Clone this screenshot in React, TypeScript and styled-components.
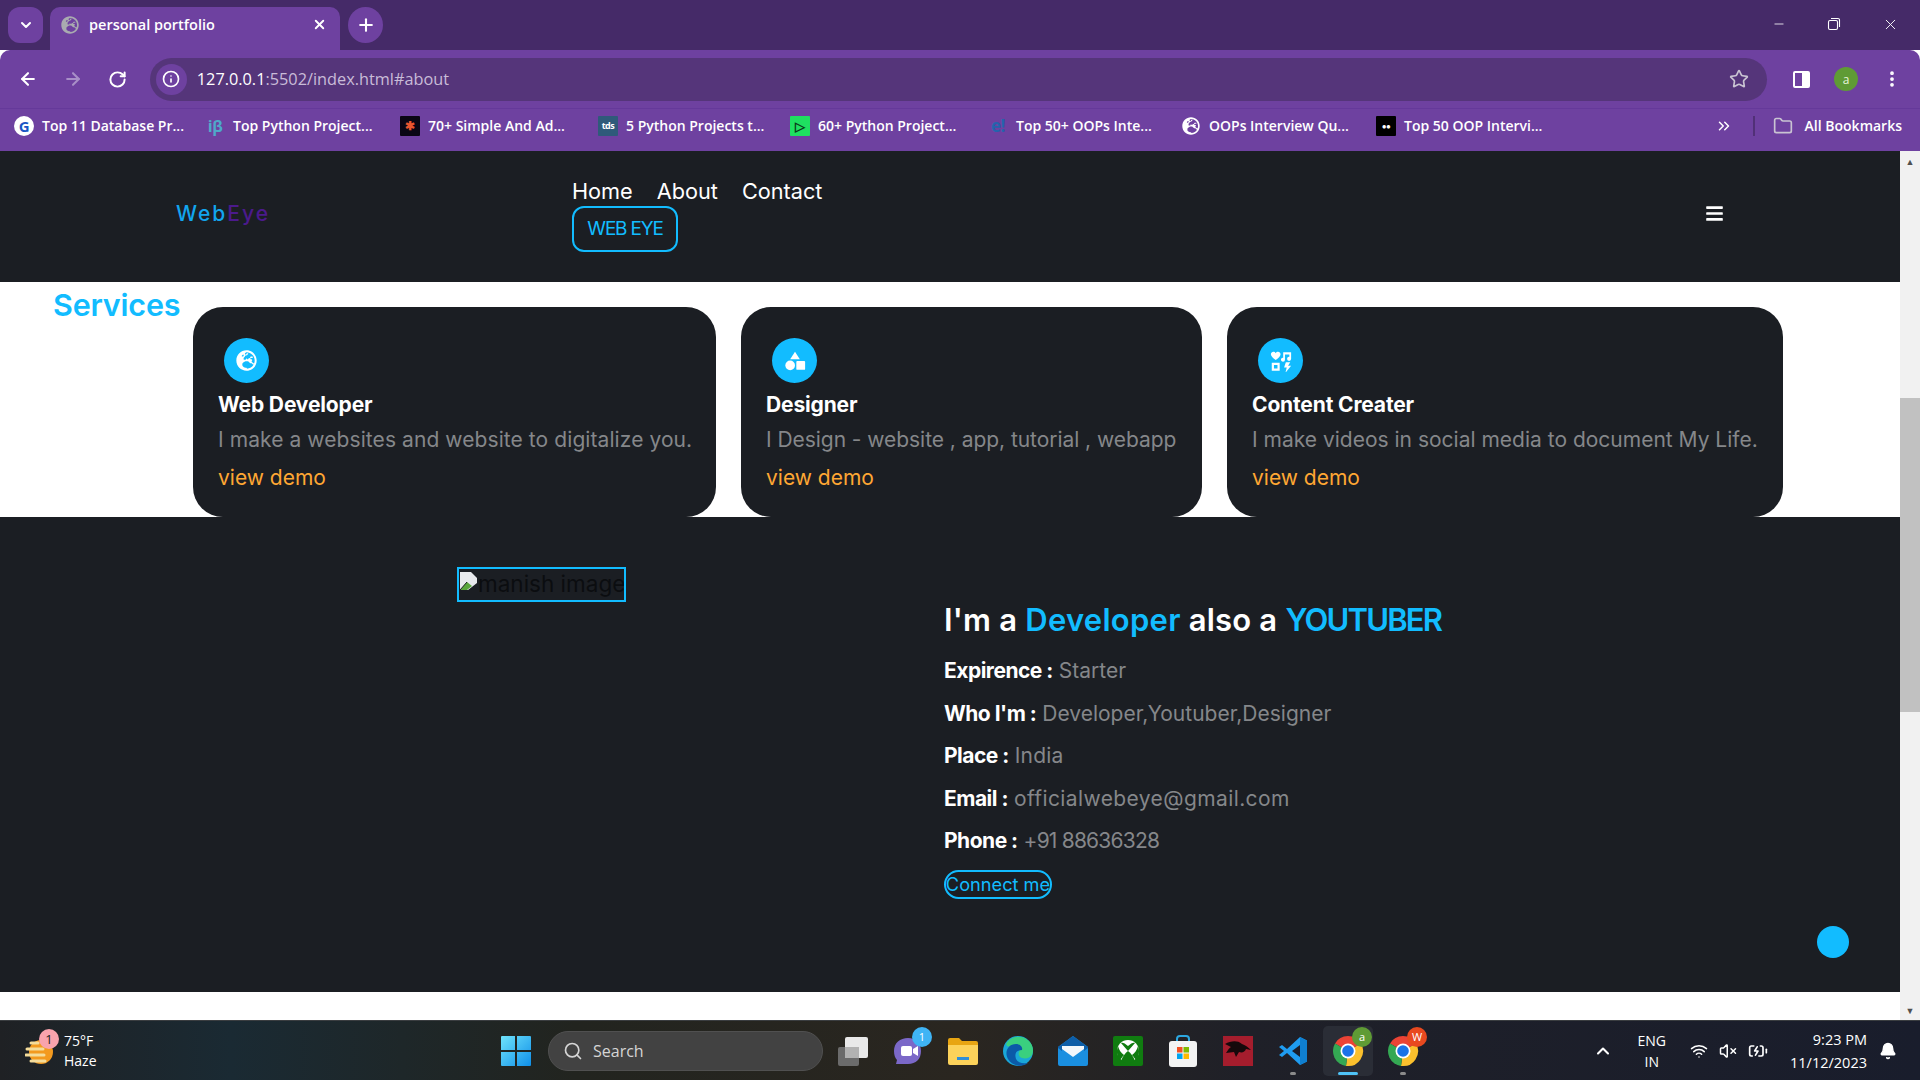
import React from 'react';
import styled, { createGlobalStyle } from 'styled-components';
import { ChevronDown, X, Plus, ArrowLeft, ArrowRight, RotateCw, Info, Star, MoreVertical, ChevronsRight, Folder, Minus, Search, ChevronUp, Wifi, VolumeX, BatteryCharging, Bell } from 'lucide-react';
import { FaBars, FaGlobeEurope } from 'react-icons/fa';

const Global = createGlobalStyle`
  html, body { margin: 0; padding: 0; width: 1920px; height: 1080px; overflow: hidden; background: #fff; }
  * { box-sizing: border-box; }
`;
const uiFont = `"Open Sans", "Noto Sans", "Liberation Sans", sans-serif`;
const webFont = `Inter, "Liberation Sans", sans-serif`;

const Shell = styled.div`width:1920px;height:1080px;display:flex;flex-direction:column;position:relative;font-family:${uiFont};`;
const TabStrip = styled.div`height:50px;background:#452a68;display:flex;align-items:flex-start;padding:7px 0 0 8px;color:#fff;`;
const ChipButton = styled.div`width:35px;height:36px;border-radius:12px;background:#6e41a0;display:flex;align-items:center;justify-content:center;margin-right:7px;`;
const Tab = styled.div`width:290px;height:43px;background:#6e41a0;border-radius:10px 10px 0 0;display:flex;align-items:center;padding:0 13px 8px 11px;font-size:14.5px;font-weight:600;gap:10px;margin-right:8px;`;
const TabTitle = styled.span`flex:1;`;
const PlusButton = styled.div`width:35px;height:36px;border-radius:50%;background:#6e41a0;display:flex;align-items:center;justify-content:center;`;
const WindowControls = styled.div`margin-left:auto;display:flex;align-items:center;gap:41px;height:34px;padding-right:21px;`;
const Toolbar = styled.div`height:58px;background:#6e41a0;border-radius:10px 10px 0 0;display:flex;align-items:center;padding:0 18px;color:#fff;`;
const NavIcons = styled.div`display:flex;align-items:center;gap:25px;width:132px;`;
const Omnibox = styled.div`width:1620px;height:43px;border-radius:22px;background:#55357a;display:flex;align-items:center;padding:0 18px 0 6px;font-size:16.3px;`;
const InfoChip = styled.div`width:31px;height:31px;border-radius:50%;background:#6e41a0;display:flex;align-items:center;justify-content:center;margin-right:10px;`;
const UrlHost = styled.span`color:#fff;`;
const UrlRest = styled.span`color:#c9bcd8;flex:1;`;
const ToolRight = styled.div`display:flex;align-items:center;gap:24px;margin-left:26px;`;
const PanelIcon = styled.div`width:17px;height:17px;border:2px solid #fff;border-right-width:8px;border-radius:2px;`;
const Avatar = styled.div`width:24px;height:24px;border-radius:50%;background:#5f9b35;color:#e8f5dc;font-size:12px;display:flex;align-items:center;justify-content:center;`;
const Bookmarks = styled.div`height:43px;background:#6e41a0;border-top:1px solid #65399a;display:flex;align-items:center;padding:0 14px 9px;color:#fff;font-size:14px;font-weight:600;`;
const Bookmark = styled.div<{ $w: number }>`width:${p => p.$w}px;display:flex;align-items:center;gap:8px;white-space:nowrap;`;
const Favicon = styled.div<{ $bg: string; $fg?: string; $round?: boolean; $size?: number }>`width:20px;height:20px;border-radius:${p => p.$round ? '50%' : '1px'};background:${p => p.$bg};color:${p => p.$fg || '#fff'};font-size:${p => p.$size || 10}px;line-height:20px;letter-spacing:-.5px;font-weight:700;display:flex;align-items:center;justify-content:center;flex:none;`;
const BookmarkEnd = styled.div`margin-left:auto;display:flex;align-items:center;gap:8px;padding-right:4px;`;
const Divider = styled.div`width:2px;height:20px;background:#513077;margin:0 10px 0 12px;`;
const FolderLabel = styled.span`margin-left:4px;`;

const Viewport = styled.div`flex:1;display:flex;min-height:0;`;
const Page = styled.main`width:1900px;display:flex;flex-direction:column;font-family:${webFont};background:#fff;`;
const Navbar = styled.nav`height:131px;background:#1b1e23;display:flex;align-items:center;padding:0 0 7px 176px;color:#fff;`;
const Logo = styled.div`width:396px;font-size:21px;letter-spacing:2px;color:#12a5ee;font-weight:500;`;
const LogoEye = styled.span`color:#4b1a8c;`;
const NavMiddle = styled.div`width:1133px;display:flex;flex-direction:column;align-items:flex-start;gap:2px;margin-top:3px;`;
const NavLinks = styled.div`display:flex;gap:24px;font-size:21.7px;font-weight:400;`;
const WebEyeButton = styled.div`width:106px;height:46px;border:2px solid #12bcff;border-radius:12px;color:#12bcff;font-size:19px;letter-spacing:-1.2px;display:flex;align-items:center;justify-content:center;`;
const Services = styled.section`height:235px;display:flex;align-items:flex-start;padding:0 0 0 53px;background:#fff;`;
const ServicesTitle = styled.h2`margin:5px 0 0;width:140px;font-size:30.5px;line-height:36px;font-weight:600;color:#12bcff;letter-spacing:-.2px;`;
const Cards = styled.div`display:flex;gap:25px;padding-top:25px;`;
const Card = styled.article<{ $w: number }>`width:${p => p.$w}px;height:210px;background:#1b1e23;border-radius:30px;padding:31px 25px 0;`;
const CardIcon = styled.div`width:45px;height:45px;border-radius:50%;background:#12bcff;color:#fff;display:flex;align-items:center;justify-content:center;margin-left:6px;`;
const CardTitle = styled.h3`margin:9px 0 0;font-size:21px;line-height:26px;font-weight:700;color:#fff;letter-spacing:-.15px;`;
const CardText = styled.p<{ $ls: number }>`margin:9px 0 0;font-size:21px;line-height:26px;color:#85878a;white-space:nowrap;letter-spacing:${p => p.$ls}px;`;
const CardLink = styled.a`display:block;margin-top:12px;font-size:21px;line-height:26px;color:#ffa733;`;
const About = styled.section`flex:1;background:#1b1e23;display:flex;padding:50px 0 0 457px;`;
const BrokenImage = styled.div`width:169px;height:35px;border:2px solid #12bcff;display:flex;align-items:flex-start;color:#0b0d10;font-size:22.5px;line-height:29px;white-space:nowrap;overflow:hidden;margin-right:318px;`;
const BrokenIcon = styled.svg`flex:none;width:19px;height:20px;margin-top:2px;`;
const Info2 = styled.div`display:flex;flex-direction:column;padding-top:34px;`;
const Heading = styled.h2`margin:0 0 11px;font-size:31px;line-height:38px;font-weight:600;color:#fff;letter-spacing:.2px;`;
const Accent = styled.span<{ $ls: number }>`color:#12bcff;letter-spacing:${p => p.$ls}px;`;
const Row = styled.div`font-size:21px;line-height:42.5px;color:#85878a;`;
const RowKey = styled.strong`font-weight:700;color:#fff;letter-spacing:-.5px;`;
const RowValue = styled.span<{ $ls: number }>`letter-spacing:${p => p.$ls}px;`;
const ConnectButton = styled.div`margin-top:7px;width:108px;height:29px;border:2px solid #12bcff;border-radius:15px;color:#12bcff;font-size:18.2px;display:flex;align-items:center;justify-content:center;white-space:nowrap;`;
const PageFoot = styled.div`height:28px;background:#fff;`;
const FloatDot = styled.div`position:absolute;left:1817px;top:926px;width:32px;height:32px;border-radius:50%;background:#12bcff;`;
const Scrollbar = styled.div`width:20px;background:#f1f1f1;display:flex;flex-direction:column;align-items:stretch;`;
const ScrollArrow = styled.div`height:20px;display:flex;align-items:center;justify-content:center;color:#505050;font-size:9px;`;
const ScrollTrack = styled.div`flex:1;padding-top:227px;`;
const ScrollThumb = styled.div`height:314px;background:#c1c1c1;`;

const Taskbar = styled.footer`height:60px;border-top:1px solid #3a3d40;background:linear-gradient(90deg,#1f2124 0,#1a2a33 12%,#22241f 30%,#2a2620 50%,#1f2028 65%,#191d2c 100%);display:flex;align-items:center;color:#fff;font-size:14px;`;
const Weather = styled.div`width:501px;display:flex;align-items:center;padding-left:25px;position:relative;`;
const WeatherBadge = styled.div`position:absolute;left:39px;top:-2px;width:20px;height:20px;border-radius:50%;background:#f9a3ad;color:#222;font-size:13px;display:flex;align-items:center;justify-content:center;`;
const WeatherText = styled.div`margin-left:9px;line-height:20px;font-size:14px;`;
const SearchPill = styled.div`width:275px;height:40px;border-radius:20px;background:#424242;border:1px solid #505050;margin:0 5px 0 17px;display:flex;align-items:center;padding:0 14px;gap:10px;font-size:16px;color:#d5d5d5;`;
const TaskIcons = styled.div`display:flex;align-items:center;gap:5px;`;
const TaskIcon = styled.div<{ $active?: boolean }>`width:50px;height:50px;border-radius:5px;background:${p => p.$active ? '#2a2d36' : 'transparent'};display:flex;align-items:center;justify-content:center;position:relative;`;
const OpenDot = styled.div<{ $active?: boolean }>`position:absolute;bottom:1px;left:50%;transform:translateX(-50%);height:3px;width:${p => p.$active ? '20px' : '6px'};border-radius:2px;background:${p => p.$active ? '#4fc3f7' : '#8b8b8b'};`;
const IconBadge = styled.div<{ $bg: string }>`position:absolute;top:1px;right:1px;width:20px;height:20px;border-radius:50%;background:${p => p.$bg};color:#fff;font-size:11px;display:flex;align-items:center;justify-content:center;`;
const Tray = styled.div`margin-left:auto;display:flex;align-items:center;padding-right:23px;`;
const Lang = styled.div`text-align:center;line-height:21px;margin:0 24px 0 25px;font-size:14px;`;
const TrayIcons = styled.div`display:flex;align-items:center;gap:11px;`;
const Clock = styled.div`text-align:right;line-height:23px;margin:0 12px 0 22px;font-size:14.5px;white-space:nowrap;`;

const Chrome = ({ s = 32 }: { s?: number }) => (
  <svg width={s} height={s} viewBox="0 0 32 32">
    <path d="M16 16L3 8.500A15 15 0 0 1 29 8.500z" fill="#ea4335" />
    <path d="M16 16L29 8.500A15 15 0 0 1 14 30.900z" fill="#fbc02d" />
    <path d="M16 16L14 30.900A15 15 0 0 1 3 8.500z" fill="#34a853" />
    <circle cx="16" cy="16" r="7.500" fill="#fff" />
    <circle cx="16" cy="16" r="5.800" fill="#1a73e8" />
  </svg>
);
const WinLogo = () => (
  <svg width="30" height="30" viewBox="0 0 30 30">
    <defs><linearGradient id="w" x1="0" y1="0" x2="1" y2="1"><stop offset="0" stopColor="#6fe3fb" /><stop offset="1" stopColor="#0f8fe8" /></linearGradient></defs>
    <path d="M0 1a1 1 0 0 1 1-1h13v14H0zM16 0h13a1 1 0 0 1 1 1v13H16zM0 16h14v14H1a1 1 0 0 1-1-1zM16 16h14v13a1 1 0 0 1-1 1H16z" fill="url(#w)" />
  </svg>
);
const TaskView = () => (
  <svg width="32" height="30" viewBox="0 0 32 30">
    <rect x="1" y="11" width="21" height="19" rx="2" fill="#6b6b6b" />
    <rect x="8" y="1" width="23" height="21" rx="2" fill="#e9e9e9" />
    <rect x="8" y="11" width="14" height="11" fill="#b2b2b2" />
  </svg>
);
const Teams = () => (
  <svg width="30" height="32" viewBox="0 0 30 32">
    <path d="M15 3c8 0 13 5 13 13s-5 13-13 13H3l1-4c-2-2-3-5-3-9C1 8 7 3 15 3z" fill="#7b68c8" />
    <rect x="8" y="11" width="11" height="10" rx="2" fill="#fff" /><path d="M20 14l5-3v10l-5-3z" fill="#fff" />
  </svg>
);
const Explorer = () => (
  <svg width="32" height="28" viewBox="0 0 32 28">
    <path d="M1 3a2 2 0 0 1 2-2h9l3 3h14a2 2 0 0 1 2 2v4H1z" fill="#e8a512" />
    <path d="M1 8h30v18a2 2 0 0 1-2 2H3a2 2 0 0 1-2-2z" fill="#fcd25a" />
    <rect x="10" y="20" width="12" height="3" fill="#2f8fd8" />
  </svg>
);
const Edge = () => (
  <svg width="32" height="32" viewBox="0 0 32 32">
    <circle cx="16" cy="16" r="15" fill="#1aa7d8" />
    <path d="M4 9C8 1 20-1 27 6c4 4 5 10 3 14-2 3-6 4-10 3-3-1-4-4-3-6 2-3-1-6-5-6-4 0-7 2-8-2z" fill="#3ad07f" />
    <path d="M6 24c-4-7 0-15 8-15 4 0 7 3 6 6-5 0-8 3-6 9 2 4 7 5 12 4-6 5-16 3-20-4z" fill="#0b5aa8" />
  </svg>
);
const Mail = () => (
  <svg width="32" height="30" viewBox="0 0 32 30">
    <path d="M16 0l15 11v17a2 2 0 0 1-2 2H3a2 2 0 0 1-2-2V11z" fill="#1a8fe0" />
    <path d="M5 10h22v3L16 21 5 13z" fill="#f2f7fb" />
    <path d="M16 0L1 11v1l4 3V10h22v5l4-3v-1z" fill="#0d5ea8" />
  </svg>
);
const Xbox = () => (
  <svg width="30" height="30" viewBox="0 0 30 30">
    <rect width="30" height="30" rx="2" fill="#107c10" />
    <circle cx="15" cy="15" r="11" fill="#fff" />
    <path d="M15 10c-3-3-6-4-7-3l7 8 7-8c-1-1-4 0-7 3zM8 25c2-5 4-8 7-10 3 2 5 5 7 10-4 2-10 2-14 0zM5 10c1 4 3 7 6 9-2 2-3 4-4 5-3-3-4-9-2-14zM25 10c-1 4-3 7-6 9 2 2 3 4 4 5 3-3 4-9 2-14z" fill="#107c10" />
  </svg>
);
const Store = () => (
  <svg width="30" height="32" viewBox="0 0 30 32">
    <path d="M9 7V4a3 3 0 0 1 3-3h6a3 3 0 0 1 3 3v3" stroke="#2ca7e0" strokeWidth="2" fill="none" />
    <rect x="1" y="6" width="28" height="26" rx="3" fill="#f3f3f3" />
    <rect x="9" y="12" width="5.500" height="5.500" fill="#f25022" /><rect x="15.500" y="12" width="5.500" height="5.500" fill="#7fba00" />
    <rect x="9" y="18.500" width="5.500" height="5.500" fill="#00a4ef" /><rect x="15.500" y="18.500" width="5.500" height="5.500" fill="#ffb900" />
  </svg>
);
const Msi = () => (
  <svg width="30" height="30" viewBox="0 0 30 30">
    <rect width="30" height="30" fill="#a51d2d" />
    <path d="M2 8c6-3 12-4 17 0 3 1 6 3 9 6l-5-1c-1 3-4 4-7 3l-3 5-2-5-8 1c2-3 3-5 5-6z" fill="#15090b" />
  </svg>
);
const VSCode = () => (
  <svg width="30" height="30" viewBox="0 0 30 30">
    <path d="M22 1l7 3.500v21L22 29 9 17l-5 4-3-2 5-4-5-4 3-2 5 4z" fill="#1f9cf0" />
    <path d="M22 9v12l-8-6z" fill="#1b1e2a" />
    <path d="M22 1l7 3.500v21L22 29z" fill="#0f7fd0" />
  </svg>
);
const ShapesIcon = () => (
  <svg width="22" height="22" viewBox="0 0 25 25" fill="#fff">
    <path d="M12.500 2l5.500 8.500H7z" /><circle cx="7" cy="17.500" r="5.500" /><rect x="14" y="12.500" width="10" height="10" rx="1" />
  </svg>
);
const ContentIcon = () => (
  <svg width="22" height="22" viewBox="0 0 25 25" fill="#fff">
    <path d="M6.500 11.500C3 8.500 1 7 1 4.800 1 3 2.400 2 3.800 2c1.200 0 2.100.6 2.700 1.600C7.100 2.600 8 2 9.200 2c1.400 0 2.800 1 2.800 2.800 0 2.200-2 3.700-5.500 6.700z" />
    <path d="M15 2.500h9V10a2.300 2.300 0 1 1-2-2.200V5h-5v6a2.300 2.300 0 1 1-2-2.200z" />
    <path fillRule="evenodd" d="M2 14.500h9v9H2zM4.500 17v4h4v-4z" />
    <path d="M18 14h5l-2.500 4H24l-6.500 8 1.500-6h-3z" />
  </svg>
);
const Broken = () => (
  <BrokenIcon viewBox="0 0 19 20">
    <path d="M1 1h11l6 6v5L9 19H1z" fill="#e8eaed" />
    <path d="M1 19l7-8 5 4-5 4z" fill="#5aa63c" />
    <path d="M1 19l7-8" stroke="#1b1e23" strokeWidth="1" />
  </BrokenIcon>
);

const marks: { w: number; t: string; bg: string; fg: string; l: React.ReactNode; round?: boolean; size?: number }[] = [
  { w: 191, t: 'Top 11 Database Pr...', bg: '#fff', fg: '#1a56c4', l: 'G', round: true, size: 15 },
  { w: 195, t: 'Top Python Project...', bg: 'transparent', fg: '#4fa9c9', l: 'iβ', size: 16 },
  { w: 198, t: '70+ Simple And Ad...', bg: '#0a0614', fg: '#e8552f', l: '✱', size: 12 },
  { w: 192, t: '5 Python Projects t...', bg: '#2f5a7a', fg: '#fff', l: 'tds', size: 9 },
  { w: 198, t: '60+ Python Project...', bg: '#1fe060', fg: '#0a3a1a', l: '▷', size: 13 },
  { w: 193, t: 'Top 50+ OOPs Inte...', bg: 'transparent', fg: '#2563ad', l: 'e!', size: 17 },
  { w: 195, t: 'OOPs Interview Qu...', bg: 'transparent', fg: '#fff', l: <FaGlobeEurope size={18} /> },
  { w: 200, t: 'Top 50 OOP Intervi...', bg: '#000', fg: '#fff', l: '●●', size: 8 },
];

const services = [
  { w: 523, t: 'Web Developer', d: 'I make a websites and website to digitalize you.', ls: .08, i: <FaGlobeEurope size={21} /> },
  { w: 461, t: 'Designer', d: 'I Design - website , app, tutorial , webapp', ls: -.05, i: <ShapesIcon /> },
  { w: 556, t: 'Content Creater', d: 'I make videos in social media to document My Life.', ls: 0, i: <ContentIcon /> },
];
const rows: { k: string; v: string; ls: number }[] = [
  { k: 'Expirence :', v: 'Starter', ls: 0 },
  { k: "Who I'm :", v: 'Developer,Youtuber,Designer', ls: 0 },
  { k: 'Place :', v: 'India', ls: .2 },
  { k: 'Email :', v: 'officialwebeye@gmail.com', ls: .4 },
  { k: 'Phone :', v: '+91 88636328', ls: -.8 },
];

export default function App() {
  return (
    <Shell>
      <Global />
      <TabStrip>
        <ChipButton><ChevronDown size={16} strokeWidth={3} /></ChipButton>
        <Tab>
          <FaGlobeEurope size={18} color="#a9abb0" />
          <TabTitle>personal portfolio</TabTitle>
          <X size={15} strokeWidth={3} />
        </Tab>
        <PlusButton><Plus size={20} strokeWidth={2.5} /></PlusButton>
        <WindowControls>
          <Minus size={14} strokeWidth={1.4} />
          <svg width="14" height="14" viewBox="0 0 14 14" fill="none" stroke="#fff" strokeWidth="1.1"><rect x="1.500" y="3.500" width="9" height="9" rx="1.500" /><path d="M4 1.500h7a1.500 1.500 0 0 1 1.500 1.500v7" /></svg>
          <X size={17} strokeWidth={1.3} />
        </WindowControls>
      </TabStrip>
      <Toolbar>
        <NavIcons>
          <ArrowLeft size={20} strokeWidth={2.5} />
          <ArrowRight size={20} strokeWidth={2.5} color="#a88fc7" />
          <RotateCw size={19} strokeWidth={2.5} />
        </NavIcons>
        <Omnibox>
          <InfoChip><Info size={18} strokeWidth={2.2} /></InfoChip>
          <UrlHost>127.0.0.1</UrlHost><UrlRest>:5502/index.html#about</UrlRest>
          <Star size={20} strokeWidth={2} color="#c9c3d2" />
        </Omnibox>
        <ToolRight>
          <PanelIcon />
          <Avatar>a</Avatar>
          <MoreVertical size={20} strokeWidth={2.5} />
        </ToolRight>
      </Toolbar>
      <Bookmarks>
        {marks.map(m => (
          <Bookmark key={m.t} $w={m.w}>
            <Favicon $bg={m.bg} $fg={m.fg} $round={m.round} $size={m.size}>{m.l}</Favicon>
            {m.t}
          </Bookmark>
        ))}
        <BookmarkEnd>
          <ChevronsRight size={18} />
          <Divider />
          <Folder size={20} color="#c9c3d2" />
          <FolderLabel>All Bookmarks</FolderLabel>
        </BookmarkEnd>
      </Bookmarks>
      <Viewport>
        <Page>
          <Navbar>
            <Logo>Web<LogoEye>Eye</LogoEye></Logo>
            <NavMiddle>
              <NavLinks><span>Home</span><span>About</span><span>Contact</span></NavLinks>
              <WebEyeButton>WEB EYE</WebEyeButton>
            </NavMiddle>
            <FaBars size={19} />
          </Navbar>
          <Services>
            <ServicesTitle>Services</ServicesTitle>
            <Cards>
              {services.map(s => (
                <Card key={s.t} $w={s.w}>
                  <CardIcon>{s.i}</CardIcon>
                  <CardTitle>{s.t}</CardTitle>
                  <CardText $ls={s.ls}>{s.d}</CardText>
                  <CardLink>view demo</CardLink>
                </Card>
              ))}
            </Cards>
          </Services>
          <About>
            <BrokenImage><Broken />manish image</BrokenImage>
            <Info2>
              <Heading>I'm a <Accent $ls={.27}>Developer</Accent> also a <Accent $ls={-1.8}>YOUTUBER</Accent></Heading>
              {rows.map(r => <Row key={r.k}><RowKey>{r.k}</RowKey> <RowValue $ls={r.ls}>{r.v}</RowValue></Row>)}
              <ConnectButton>Connect me</ConnectButton>
            </Info2>
          </About>
          <PageFoot />
        </Page>
        <Scrollbar>
          <ScrollArrow>▲</ScrollArrow>
          <ScrollTrack><ScrollThumb /></ScrollTrack>
          <ScrollArrow>▼</ScrollArrow>
        </Scrollbar>
      </Viewport>
      <FloatDot />
      <Taskbar>
        <Weather>
          <svg width="30" height="32" viewBox="0 0 30 32">
            <circle cx="16" cy="17" r="12" fill="#f39a1f" />
            <path d="M6 8h7M2 14h16M1 20h18M6 26h14" stroke="#f4dc9a" strokeWidth="3" strokeLinecap="round" />
          </svg>
          <WeatherBadge>1</WeatherBadge>
          <WeatherText>75°F<br />Haze</WeatherText>
        </Weather>
        <WinLogo />
        <SearchPill><Search size={20} strokeWidth={2} />Search</SearchPill>
        <TaskIcons>
          <TaskIcon><TaskView /></TaskIcon>
          <TaskIcon><Teams /><IconBadge $bg="#3fb4f5">1</IconBadge></TaskIcon>
          <TaskIcon><Explorer /></TaskIcon>
          <TaskIcon><Edge /></TaskIcon>
          <TaskIcon><Mail /></TaskIcon>
          <TaskIcon><Xbox /></TaskIcon>
          <TaskIcon><Store /></TaskIcon>
          <TaskIcon><Msi /></TaskIcon>
          <TaskIcon><VSCode /><OpenDot /></TaskIcon>
          <TaskIcon $active><Chrome /><IconBadge $bg="#5f9b35">a</IconBadge><OpenDot $active /></TaskIcon>
          <TaskIcon><Chrome /><IconBadge $bg="#e8491f">W</IconBadge><OpenDot /></TaskIcon>
        </TaskIcons>
        <Tray>
          <ChevronUp size={20} strokeWidth={2.5} />
          <Lang>ENG<br />IN</Lang>
          <TrayIcons>
            <Wifi size={18} /><VolumeX size={18} /><BatteryCharging size={20} />
          </TrayIcons>
          <Clock>9:23 PM<br />11/12/2023</Clock>
          <Bell size={18} fill="#fff" />
        </Tray>
      </Taskbar>
    </Shell>
  );
}
